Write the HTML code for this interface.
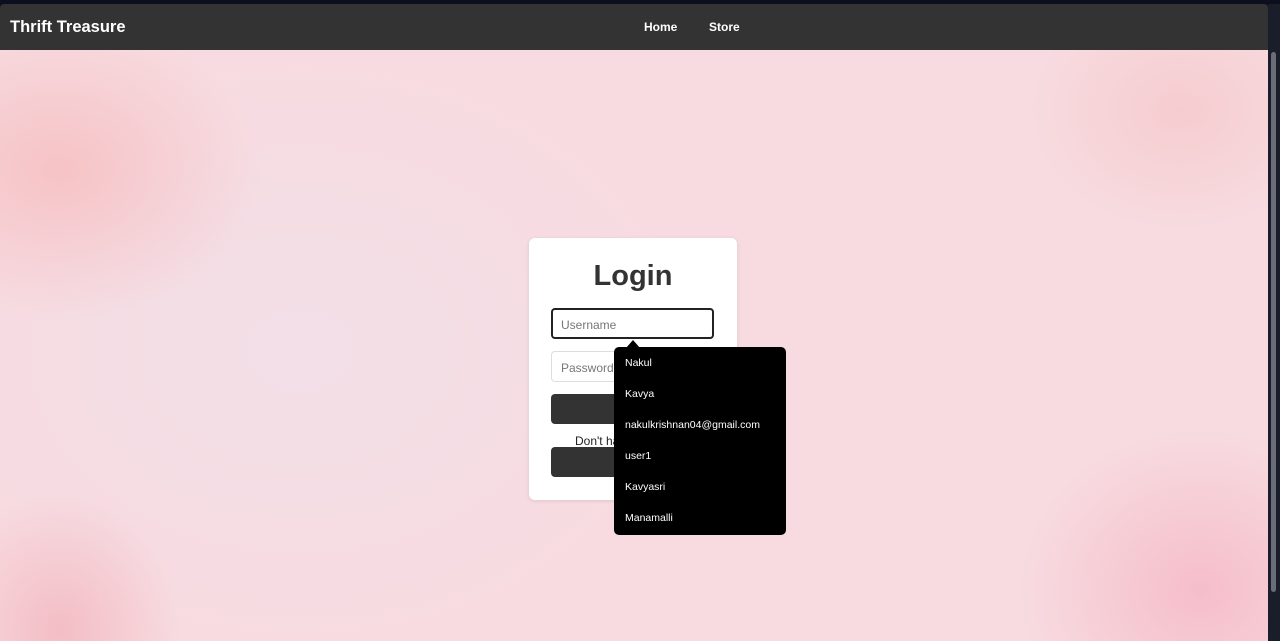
<!DOCTYPE html>
<html><head><meta charset="utf-8"><style>
*{box-sizing:border-box;margin:0;padding:0}
html,body{width:1280px;height:641px;overflow:hidden;font-family:"Liberation Sans",Arial,sans-serif}
body{background:#0b0f1e;position:relative}
.bg{position:absolute;left:0;top:50px;width:1268px;height:591px;
background:
radial-gradient(ellipse 200px 150px at 60px 120px,rgba(245,170,170,.5),transparent),
radial-gradient(ellipse 180px 160px at 1200px 540px,rgba(245,160,180,.5),transparent),
radial-gradient(ellipse 150px 120px at 1180px 60px,rgba(245,190,190,.5),transparent),
radial-gradient(ellipse 120px 140px at 60px 580px,rgba(240,160,170,.5),transparent),
radial-gradient(ellipse 400px 300px at 300px 300px,rgba(240,225,235,.7),transparent),
#f7dbe0}
.nav{position:absolute;left:0;top:4px;width:1268px;height:46px;background:#333;color:#fff;border-radius:4px 4px 0 0}
.brand{position:absolute;left:10px;top:14px;font-size:16.5px;font-weight:bold}
.nav a{position:absolute;top:16px;font-size:12px;font-weight:bold;color:#fff;text-decoration:none}
.sb{position:absolute;right:0;top:4px;width:12px;height:637px;background:#1a1d2a}
.sb i{position:absolute;left:3px;top:48px;width:5px;height:540px;background:#6a6d78;border-radius:3px}
.card{position:absolute;left:529px;top:238px;width:208px;height:262px;background:#fff;border-radius:6px;box-shadow:0 1px 4px rgba(0,0,0,.1)}
h1{position:absolute;left:0;width:100%;text-align:center;top:22px;font-size:29px;color:#333}
.in{position:absolute;left:22px;width:163px;height:31px;border:1px solid #ddd;border-radius:4px;font-size:12px;color:#777;padding:9px 9px}
.u{top:70px;border:2px solid #222;padding:8px 8px}
.btn{position:absolute;left:22px;width:163px;height:30px;background:#333;border-radius:4px}
.t{position:absolute;left:46px;top:196px;font-size:12px;color:#222}
.dd{position:absolute;left:614px;top:347px;width:172px;height:188px;background:#000;border-radius:5px;color:#fff;font-size:10.5px}
.dd div{position:absolute;left:11px}
.arr{position:absolute;left:626px;top:340px;width:0;height:0;border-left:7px solid transparent;border-right:7px solid transparent;border-bottom:8px solid #000}
</style></head><body>
<div class="bg"></div>
<div class="nav"><div class="brand">Thrift Treasure</div><a style="left:644px">Home</a><a style="left:709px">Store</a></div>
<div class="sb"><i></i></div>
<div class="card">
<h1>Login</h1>
<div class="in u">Username</div>
<div class="in" style="top:113px">Password</div>
<div class="btn" style="top:156px"></div>
<div class="t">Don't have an account?</div>
<div class="btn" style="top:209px"></div>
</div>
<div class="arr"></div>
<div class="dd">
<div style="top:10px">Nakul</div>
<div style="top:41px">Kavya</div>
<div style="top:72px">nakulkrishnan04@gmail.com</div>
<div style="top:103px">user1</div>
<div style="top:134px">Kavyasri</div>
<div style="top:165px">Manamalli</div>
</div>
</body></html>
